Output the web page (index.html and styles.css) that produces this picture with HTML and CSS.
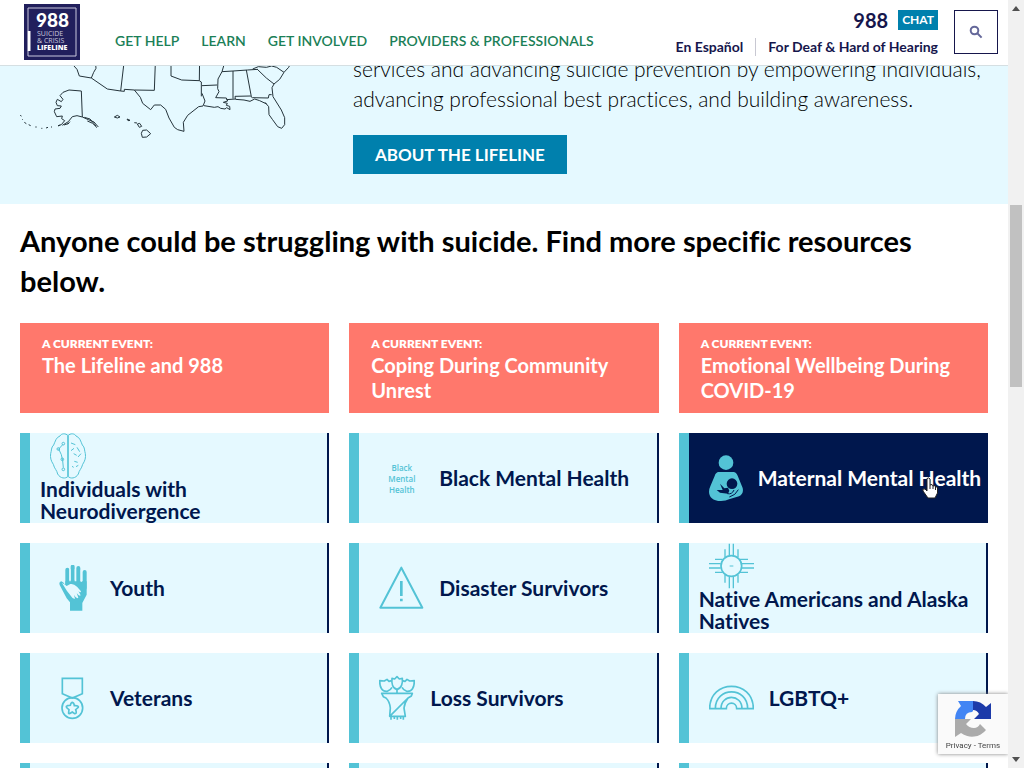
FILE: index.html
```
<!DOCTYPE html>
<html lang="en">
<head>
  <meta charset="UTF-8" />
  <meta name="viewport" content="width=device-width, initial-scale=1.0" />
  <title>988 Suicide &amp; Crisis Lifeline</title>
  <link rel="stylesheet" href="styles.css">
</head>
<body>
  <div class="page">
    <header class="site-header">
      <a class="logo" href="#" aria-label="988 Suicide and Crisis Lifeline">
        <svg viewBox="0 0 56 56" width="56" height="56">
          <rect width="56" height="56" fill="#211f5c"/>
          <path d="M4 27V4H52V52H4V47" fill="none" stroke="#c9c8dd"/>
          <path d="M5 27V47" stroke="#fff" stroke-width="3"/>
          <text class="logo-number" x="12" y="23" fill="#fff">988</text>
          <text class="logo-thin" x="13" y="32" fill="#c9c8dd">SUICIDE</text>
          <text class="logo-thin" x="13" y="39" fill="#c9c8dd">&amp; CRISIS</text>
          <text class="logo-bold" x="13" y="46" fill="#fff">LIFELINE</text>
        </svg>
      </a>
      <nav class="main-nav">
        <a href="#">GET HELP</a>
        <a href="#">LEARN</a>
        <a href="#">GET INVOLVED</a>
        <a href="#">PROVIDERS &amp; PROFESSIONALS</a>
      </nav>
      <div class="contact">
        <div class="contact-top">
          <a class="number" href="#">988</a>
          <a class="chat" href="#">CHAT</a>
        </div>
        <div class="contact-links">
          <a href="#">En Español</a>
          <a href="#">For Deaf &amp; Hard of Hearing</a>
        </div>
      </div>
      <button class="search" type="button" aria-label="Search">
        <svg viewBox="0 0 14 14" width="14" height="14" fill="none" stroke="#65689a" stroke-width="2">
          <circle cx="5.5" cy="5.5" r="3.8"/>
          <path d="M8.3 8.3L12.6 12.6"/>
        </svg>
      </button>
    </header>

    <section class="intro">
      <svg class="map" viewBox="60 162 819 264" fill="none" stroke="#25343b" stroke-width="3" stroke-linejoin="round">
        <!-- southwest -->
        <path d="M205 162L222 198L231 208L238 228L274 234L281 217L288 205L284 162"/>
        <path d="M274 234L322 267L362 273L375 162M362 273L373 274V268L403 270L463 271L467 162"/>
        <path d="M513 162V228L545 240L598 242L599 162M598 242L604 246V289"/>
        <!-- texas and the gulf -->
        <path d="M403 270L421 292L428 310L452 329L463 315L482 315L497 328L507 354L523 382L533 389L552 394L550 367L563 346L596 320L609 318L615 303L606 280"/>
        <path d="M606 257L651 255M668 162L671 198L666 215L654 237L653 266L657 275L647 293L679 294L683 303L670 307L682 310L679 316L689 319L690 329L680 323L675 327L662 325L654 320L643 322L612 317"/>
        <path d="M666 215L699 213L742 210L774 208M699 213V296M739 210L754 290M679 299L706 297L705 289L751 288L757 293L805 294L807 284L815 284M706 298L732 300L750 304L764 297L779 302L800 312"/>
        <!-- southeast -->
        <path d="M758 207L775 200L799 202L815 198L830 202L852 217L866 202L872 190M772 208L799 234L822 252L839 238L852 217M822 252L816 263L819 290L844 330L854 353V374L845 385L833 380L817 358L807 344L806 320L795 307"/>
        <!-- alaska -->
        <path d="M244 273L207 270L189 277L180 287L189 298L184 305L172 298L168 307L172 317L184 318L180 325L165 327L163 335L170 350L187 348L185 356L194 362L184 374L174 377M187 376L205 365L217 350L231 347L247 351L244 273M247 351L265 359L282 366L295 381M202 373L210 365M253 352L270 357L282 371L288 378M262 363L278 370L291 383M192 375L207 370"/>
        <path d="M174 378L181 375M153 381H156M138 384L144 382M124 385H127M106 381H110M86 374L92 377M73 367L79 371M66 357L68 359M61 345L64 349"/>
        <!-- hawaii -->
        <path d="M343 351L352 346L360 351L352 354ZM381 357L390 361L384 362ZM403 368L411 369M412 372L419 370L425 379L418 382ZM428 391L440 390L452 401L440 411L427 412L424 400Z"/>
      </svg>
      <div class="intro-text">
        <p>services and advancing suicide prevention by empowering individuals, advancing professional best practices, and building awareness.</p>
        <a class="about-button" href="#">ABOUT THE LIFELINE</a>
      </div>
    </section>

    <main class="resources">
      <h2>Anyone could be struggling with suicide. Find more specific resources below.</h2>
      <div class="grid">
        <a class="event" href="#"><span class="event-label">A CURRENT EVENT:</span><span class="event-title">The Lifeline and 988</span></a>
        <a class="event" href="#"><span class="event-label">A CURRENT EVENT:</span><span class="event-title">Coping During Community Unrest</span></a>
        <a class="event" href="#"><span class="event-label">A CURRENT EVENT:</span><span class="event-title">Emotional Wellbeing During COVID-19</span></a>

        <a class="card stacked" href="#">
          <svg class="icon" viewBox="150 39 108 138" width="36" height="46" fill="none" stroke="#53c3d6" stroke-width="3">
            <path d="M204 47C197 39 184 40 180 48C168 52 166 64 161 75C153 82 155 92 152 101C150 112 153 123 160 133C163 146 171 151 173 162C181 176 197 177 204 169C211 177 227 176 235 162C237 151 245 146 248 133C255 123 258 112 256 101C253 92 255 82 247 75C242 64 240 52 228 48C224 40 211 39 204 47Z"/>
            <path d="M204 47V169" stroke-width="5"/>
            <path d="M189 73L176 87L184 104L188 122L190 143M213 69L226 74M213 92L222 85M231 82L239 95M221 101L230 106M234 111L243 101M223 124L233 127M216 139L221 142M228 140L235 136"/>
            <circle cx="190" cy="71" r="4"/><circle cx="175" cy="87" r="4"/><circle cx="187" cy="118" r="4"/><circle cx="190" cy="148" r="4"/>
          </svg>
          <span>Individuals with Neurodivergence</span>
        </a>
        <a class="card" href="#">
          <span class="word-icon" aria-hidden="true">Black Mental Health</span>
          <span>Black Mental Health</span>
        </a>
        <a class="card active" href="#">
          <svg class="icon" viewBox="117 105 102 138" width="34" height="46" fill="#53c3d6">
            <circle cx="168" cy="128" r="22"/>
            <path d="M146 156H190Q199 157 203 167L218 204Q222 222 207 229L177 238Q168 243 153 243C128 243 117 230 117 215Q117 207 121 199L134 168Q137 157 146 156Z"/>
            <path d="M150 191L163 205L174 203L178 212L174 221L150 218L140 210L158 210Z" fill="#00174d"/>
            <circle cx="186" cy="191" r="16" fill="#00174d"/>
            <path d="M172 221Q186 224 192 210M205 209Q197 226 178 231" fill="none" stroke="#00174d" stroke-width="3"/>
          </svg>
          <span>Maternal Mental Health</span>
          <svg class="pointer" viewBox="0 0 16 22" width="16" height="22">
            <path d="M5 1.5Q7 0 8 2V8L10 7.5L11 9L13 8.5L13.5 10L15.5 10V16L13 21H6L1 14Q0 11 3 12L5 14Z" fill="#fff" stroke="#222"/>
            <path d="M8 8V12M11 9V12M13.5 10V13" stroke="#222"/>
          </svg>
        </a>

        <a class="card" href="#">
          <svg class="icon" viewBox="150 436 135 138" width="45" height="46">
            <path d="M202 500V450M218 500V441M235 500V445M254 505V457" stroke="#53c3d6" stroke-width="12" stroke-linecap="round"/>
            <path d="M196 485H260V525L247 550V573H210V548L200 536L179 496Q176 487 184 485Q190 486 196 497Z" fill="#53c3d6"/>
            <path d="M186 490Q193 493 200 499L211 493Q221 491 231 501L243 515Q242 521 235 514L242 527Q238 531 230 520L235 534Q230 539 222 526L225 537Q219 540 211 527L201 514Z" fill="#e5f9ff"/>
            <path d="M210 482V449M226 482V449M244 486V451" stroke="#e5f9ff" stroke-width="4"/>
          </svg>
          <span>Youth</span>
        </a>
        <a class="card" href="#">
          <svg class="icon" viewBox="117 436 135 138" width="45" height="46" fill="none" stroke="#53c3d6" stroke-width="6" stroke-linejoin="round">
            <path d="M184 444L121 564H247Z"/>
            <path d="M184 484V529M184 537V545" stroke-width="8"/>
          </svg>
          <span>Disaster Survivors</span>
        </a>
        <a class="card stacked" href="#">
          <svg class="icon" viewBox="117 369 135 138" width="45" height="46" fill="none" stroke="#53c3d6" stroke-width="4">
            <circle cx="184" cy="438" r="31" stroke-width="5"/>
            <path d="M179 438H190" stroke-width="3"/>
            <path d="M178 406V371M190 406V371M165 411V388M204 411V388M178 470V505M190 470V505M165 465V488M204 465V488"/>
            <path d="M152 431H117M152 444H117M158 418H135M158 457H135M216 431H252M216 444H252M210 418H234M210 457H234"/>
          </svg>
          <span>Native Americans and Alaska Natives</span>
        </a>

        <a class="card" href="#">
          <svg class="icon" viewBox="150 105 135 138" width="45" height="46" fill="none" stroke="#53c3d6" stroke-width="5">
            <path d="M187 115H247V161L217 174L187 161Z"/>
            <circle cx="217" cy="204" r="31"/>
            <path d="M217 187Q222 188 223 197Q237 196 235 202L227 209Q232 222 224 221L217 216Q204 225 206 217L207 209Q194 200 202 197L211 196Q213 187 217 187Z"/>
          </svg>
          <span>Veterans</span>
        </a>
        <a class="card" href="#">
          <svg class="icon" viewBox="117 105 108 138" width="36" height="46" fill="none" stroke="#53c3d6" stroke-width="5" stroke-linejoin="round">
            <path d="M156 115L164 117L171 110L178 117L187 115C189 130 184 145 171 148C158 145 154 130 156 115Z"/>
            <path d="M155 122L147 124L141 118L133 123L119 122C119 142 126 156 142 154Q151 151 156 142M187 122L195 124L201 118L209 123L223 122C223 142 216 156 200 154Q191 151 186 142M171 148V160"/>
            <path d="M125 160H217L214 168L204 174Q193 190 192 204L196 229H149L151 204Q149 184 138 174L130 170ZM204 174L149 229M153 230V239M163 230V237M172 230V239M182 230V237M190 230V239"/>
          </svg>
          <span>Loss Survivors</span>
        </a>
        <a class="card" href="#">
          <svg class="icon" viewBox="117 105 135 138" width="45" height="46" fill="none" stroke="#53c3d6" stroke-width="5">
            <path d="M119 206C119 117 250 117 250 206H200C200 184 169 184 169 206Z"/>
            <path d="M136 206C136 139 233 139 233 206M153 206C153 161 216 161 216 206"/>
          </svg>
          <span>LGBTQ+</span>
        </a>

        <a class="card" href="#" aria-label="More resources"></a>
        <a class="card" href="#" aria-label="More resources"></a>
        <a class="card" href="#" aria-label="More resources"></a>
      </div>
    </main>
  </div>

  <div class="scrollbar" aria-hidden="true">
    <span class="arrow-up"></span>
    <span class="thumb"></span>
    <span class="arrow-down"></span>
  </div>

  <aside class="recaptcha">
    <svg viewBox="0 0 38 38" width="38" height="38">
      <path d="M19 1A18 18 0 0 1 32 7L37 3V19H20L25 14Q23 10 19 10Z" fill="#1c3aa9"/>
      <path d="M19 1V11L18 12Q11 12 11 19H1A18 18 0 0 1 7 6L4 1Z" fill="#4285f4"/>
      <path d="M1 19H17L12 24Q15 28 20 28Q24 28 26 24L32 30A18 18 0 0 1 7 33L1 37Z" fill="#ababab"/>
    </svg>
    <div><a href="#">Privacy</a> - <a href="#">Terms</a></div>
  </aside>
</body>
</html>
```
FILE: styles.css
```
* {
  box-sizing: border-box;
}

body {
  margin: 0;
  height: 100vh;
  display: flex;
  overflow: hidden;
  background: #fff;
  color: #000;
  font-family: Lato, "Open Sans", sans-serif;
  font-variant-ligatures: none;
}

a {
  color: inherit;
  text-decoration: none;
}

svg {
  display: block;
  flex-shrink: 0;
}

.page {
  flex: 1;
  min-width: 0;
  height: 100%;
  overflow: hidden;
}

/* Header */
.site-header {
  position: relative;
  z-index: 2;
  height: 66px;
  display: flex;
  padding: 4px 10px 0 24px;
  background: #fff;
  border-bottom: 1px solid #d5dfe2;
}

.logo-number {
  font-size: 19px;
  font-weight: 900;
}

.logo-thin,
.logo-bold {
  font-family: "Open Sans", sans-serif;
  font-size: 7px;
}

.logo-bold {
  font-weight: 800;
}

.main-nav {
  display: flex;
  gap: 22px;
  margin-left: 35px;
  padding-top: 28px;
  color: #1b8057;
  font-size: 14px;
  font-weight: 600;
  line-height: 18px;
  white-space: nowrap;
}

.contact {
  margin-left: auto;
  padding-top: 5px;
  color: #16164c;
  white-space: nowrap;
}

.contact-top {
  display: flex;
  justify-content: flex-end;
  align-items: center;
  gap: 10px;
  height: 22px;
}

.number {
  font-size: 20px;
  font-weight: 700;
}

.chat {
  padding: 0 4px;
  background: #0080ad;
  color: #fff;
  font-size: 12px;
  font-weight: 700;
  line-height: 20px;
}

.contact-links {
  display: flex;
  margin-top: 7px;
  font-size: 14px;
  font-weight: 700;
  line-height: 18px;
}

.contact-links a + a {
  margin-left: 12px;
  padding-left: 12px;
  border-left: 1px solid #c8c8d2;
}

.search {
  width: 44px;
  height: 44px;
  margin: 6px 0 0 16px;
  padding: 0;
  display: flex;
  align-items: center;
  justify-content: center;
  background: #fff;
  border: 1px solid #16164c;
}

/* Intro, the top is scrolled under the header */
.intro {
  display: flex;
  gap: 60px;
  margin-top: -12px;
  padding: 0 20px 30px;
  background: #e5f9ff;
}

.map {
  width: 273px;
  height: 88px;
}

.intro-text {
  flex: 1;
}

.intro-text p {
  margin: 0 0 21px;
  font-size: 21px;
  font-weight: 300;
  line-height: 30px;
}

.about-button {
  display: inline-block;
  padding: 0 22px;
  background: #0080ad;
  color: #fff;
  font-size: 17px;
  font-weight: 700;
  line-height: 39px;
  vertical-align: top;
}

/* Resources */
.resources {
  padding: 17px 20px;
}

.resources h2 {
  margin: 0 0 22px;
  font-size: 29px;
  font-weight: 700;
  line-height: 40px;
}

.grid {
  display: grid;
  grid-template-columns: repeat(3, 1fr);
  grid-auto-rows: minmax(90px, auto);
  gap: 20px;
}

.event {
  padding: 12px 22px 10px;
  background: #ff786c;
  color: #fff;
  font-weight: 700;
}

.event-label {
  display: block;
  font-size: 12px;
  font-weight: 800;
  line-height: 18px;
}

.event-title {
  display: block;
  font-size: 20px;
  line-height: 25px;
}

.card {
  position: relative;
  display: flex;
  align-items: center;
  gap: 15px;
  padding-left: 20px;
  background: #e5f9ff;
  border-left: 10px solid #53c3d6;
  border-right: 2px solid #00174d;
  color: #00174d;
  font-size: 21px;
  font-weight: 700;
  line-height: 22px;
}

.card.stacked {
  flex-direction: column;
  align-items: flex-start;
  gap: 0;
  padding-left: 10px;
}

.stacked .icon {
  margin: 0 0 -1px 10px;
}

.card.active {
  background: #00174d;
  color: #fff;
  white-space: nowrap;
}

.word-icon {
  width: 45px;
  padding: 0 6px;
  color: #53c3d6;
  font-family: "Open Sans", sans-serif;
  font-size: 8px;
  font-weight: 600;
  line-height: 11px;
  text-align: center;
}

.pointer {
  position: absolute;
  right: 48px;
  top: 44px;
}

/* Scrollbar */
.scrollbar {
  width: 16px;
  display: flex;
  flex-direction: column;
  align-items: center;
  padding: 6px 0;
  background: #f1f1f1;
}

.thumb {
  width: 12px;
  height: 182px;
  margin-top: 194px;
  background: #c1c1c1;
}

.arrow-up,
.arrow-down {
  border: 4px solid transparent;
}

.arrow-up {
  border-top: 0;
  border-bottom: 5px solid #505050;
}

.arrow-down {
  margin-top: auto;
  border-bottom: 0;
  border-top: 5px solid #505050;
}

/* Badge */
.recaptcha {
  position: fixed;
  right: 16px;
  bottom: 14px;
  z-index: 3;
  width: 70px;
  height: 60px;
  padding-top: 6px;
  display: flex;
  flex-direction: column;
  align-items: center;
  background: #fafafa;
  box-shadow: 0 0 4px #808080;
  clip-path: inset(-5px 0 -5px -5px);
  color: #444;
  font-family: Roboto, sans-serif;
  font-size: 8px;
  line-height: 16px;
}
```
